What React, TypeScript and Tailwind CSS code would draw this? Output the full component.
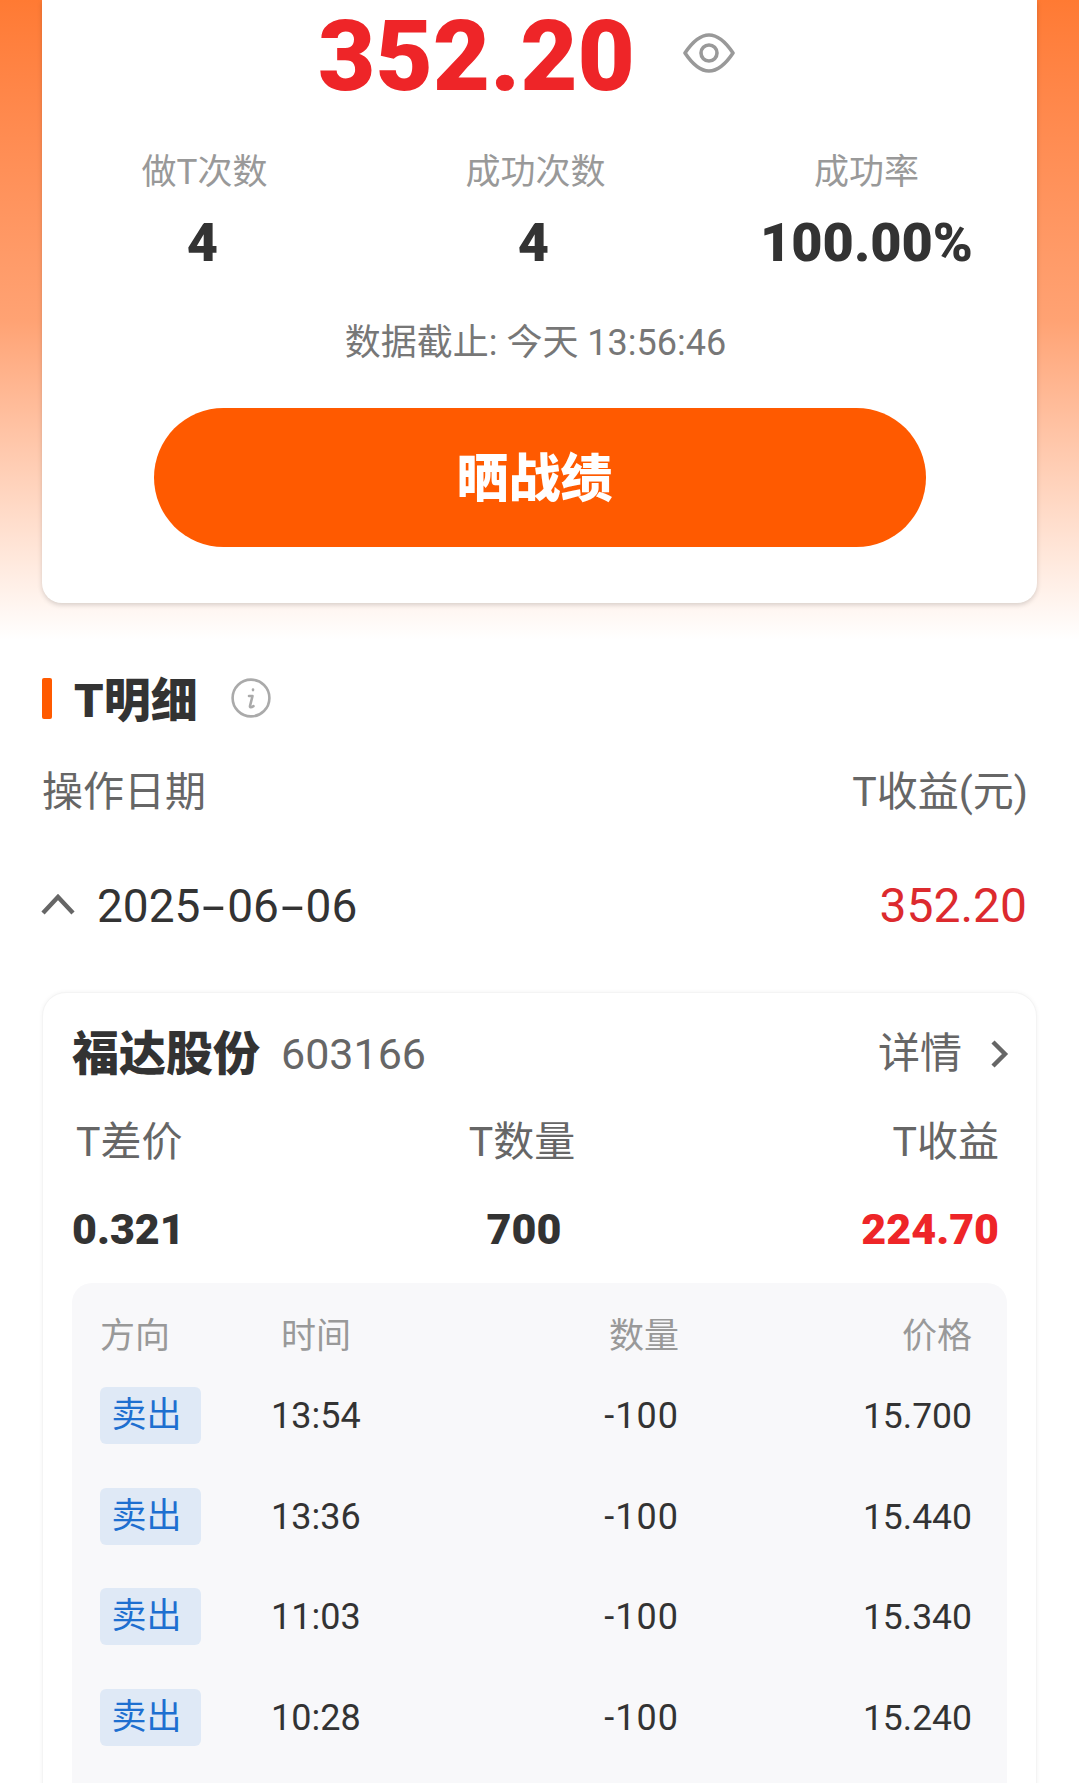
const summary = [
  { label: "做T次数", value: "4" },
  { label: "成功次数", value: "4" },
  { label: "成功率", value: "100.00%" },
];

const trades = [
  { time: "13:54", qty: "-100", price: "15.700" },
  { time: "13:36", qty: "-100", price: "15.440" },
  { time: "11:03", qty: "-100", price: "15.340" },
  { time: "10:28", qty: "-100", price: "15.240" },
];

const font = "font-['Roboto','Noto_Sans_CJK_SC',sans-serif]";

export default function App() {
  return (
    <div className={`h-[1783px] w-[1079px] overflow-hidden bg-white text-[#333] ${font}`}>
      {/* Orange hero with the summary card */}
      <section className="h-[640px] bg-gradient-to-b from-[#ff7a33] via-[#ffa273] to-white px-[42px]">
        <div className="flex h-[603px] flex-col items-center rounded-b-[20px] bg-white shadow-[0_2px_5px_rgba(0,0,0,0.16)]">
          <div className="mr-[26px] mt-[7px] flex h-[98px] items-center">
            <span className="text-[99px] leading-none font-black text-[#ee2528]">352.20</span>
            <svg viewBox="0 0 52 40" className="mb-[6px] ml-[48px] h-[40px] w-[52px] text-[#999]" fill="none" stroke="currentColor" strokeWidth="3.6">
              <path d="M2 20C10 8 18 2 26 2s16 6 24 18c-8 12-16 18-24 18S10 32 2 20Z" strokeLinejoin="round" />
              <circle cx="26" cy="20" r="8" />
            </svg>
          </div>
          <div className="mr-[8px] mt-[42px] grid w-[993px] grid-cols-3 text-center">
            {summary.map((s) => (
              <div key={s.label}>
                <div className="text-[35px] leading-[52px] text-[#999]">{s.label}</div>
                <div className={`mt-[18px] text-[54px] leading-[52px] font-black ${s.value === "4" ? "pr-[4px]" : ""}`}>{s.value}</div>
              </div>
            ))}
          </div>
          <p className="mr-[8px] mt-[48px] text-[36px] leading-[52px] text-[#777]">数据截止: 今天 13:56:46</p>
          <button className="mt-[39px] h-[139px] w-[772px] rounded-full bg-[#ff5a00] pr-[10px] pt-[4px] text-[52px] font-black text-white">
            晒战绩
          </button>
        </div>
      </section>

      {/* Section heading */}
      <div className="mt-[25px] flex items-center px-[42px]">
        <span className="h-[41px] w-[10px] rounded-[2px] bg-[#ff5a00]" />
        <h2 className="ml-[22px] pt-[6px] text-[47px] leading-[60px] font-black">T明细</h2>
        <svg viewBox="0 0 40 40" className="ml-[33px] size-[40px] text-[#aaa]" fill="none" stroke="currentColor">
          <circle cx="20" cy="20" r="18.4" strokeWidth="2.6" />
          <path d="M22 11.5v.6M18 18h3.5l-2.5 10c-.3 1.4 1 1.8 3.5.2" strokeWidth="2.6" strokeLinecap="round" strokeLinejoin="round" />
        </svg>
      </div>

      <div className="mt-[33px] flex items-center justify-between pl-[42px] pr-[51px] text-[41px] leading-[56px] text-[#666]">
        <span>操作日期</span>
        <span>T收益(元)</span>
      </div>

      <div className="mt-[58px] flex items-center justify-between pl-[41px] pr-[52px]">
        <div className="flex items-center">
          <svg viewBox="0 0 34 22" className="mb-[5px] h-[22px] w-[34px] text-[#666]" fill="none" stroke="currentColor" strokeWidth="4.4">
            <path d="M2 20 17 4l15 16" />
          </svg>
          <span className="ml-[22px] text-[46px] leading-[56px]">
            2025<span className="mx-[7px] inline-block scale-x-[1.8]">-</span>06<span className="mx-[7px] inline-block scale-x-[1.8]">-</span>06
          </span>
        </div>
        <span className="text-[48px] leading-[56px] text-[#dc2a2e]">352.20</span>
      </div>

      {/* Stock card */}
      <div className="mx-[42px] mt-[58px] h-[900px] rounded-[24px] border border-[#f4f4f4] bg-white px-[29px] pt-[33px] shadow-[0_0_4px_rgba(0,0,0,0.05)]">
        <div className="flex items-center justify-between">
          <div className="flex items-center">
            <span className="text-[47px] leading-[56px] font-black">福达股份</span>
            <span className="ml-[21px] text-[43px] leading-[56px] text-[#666]">603166</span>
          </div>
          <div className="-mr-[3px] flex items-center text-[42px] leading-[56px] text-[#666]">
            详情
            <svg viewBox="0 0 20 30" className="ml-[28px] h-[30px] w-[20px]" fill="none" stroke="currentColor" strokeWidth="4.4">
              <path d="M3 3l12 12L3 27" />
            </svg>
          </div>
        </div>

        <div className="mt-[32px] grid grid-cols-[302px_300px_1fr] pr-[8px] text-[41px] leading-[56px] text-[#666]">
          <span className="pl-[4px]">T差价</span>
          <span className="pr-[4px] text-center">T数量</span>
          <span className="text-right">T收益</span>
        </div>
        <div className="mt-[31px] grid grid-cols-[302px_300px_1fr] pr-[8px] text-[43px] leading-[56px] font-black">
          <span>0.321</span>
          <span className="text-center">700</span>
          <span className="text-right text-[#ee2528]">224.70</span>
        </div>

        {/* Trade list */}
        <div className="mt-[26px] h-[600px] rounded-[20px] bg-[#f8f8fa] pl-[28px] pr-[35px] pt-[30px]">
          <div className="grid grid-cols-[181px_201px_197px_1fr] text-[35px] leading-[48px] text-[#999]">
            <span>方向</span>
            <span>时间</span>
            <span className="text-right">数量</span>
            <span className="text-right">价格</span>
          </div>
          <div className="mt-[26px] flex flex-col gap-[41.6px]">
            {trades.map((t) => (
              <div key={t.time} className="grid grid-cols-[171px_211px_197px_1fr] items-center text-[36px] leading-[57px] text-[#333]">
                <span className="mb-[2px] flex h-[57px] w-[101px] items-center justify-center rounded-[6px] bg-[#dfe9f6] pr-[8px] text-[35px] text-[#1e6fd0]">
                  卖出
                </span>
                <span>{t.time}</span>
                <span className="text-right tracking-[1px]">{t.qty}</span>
                <span className="text-right text-[35.5px]">{t.price}</span>
              </div>
            ))}
          </div>
        </div>
      </div>
    </div>
  );
}
